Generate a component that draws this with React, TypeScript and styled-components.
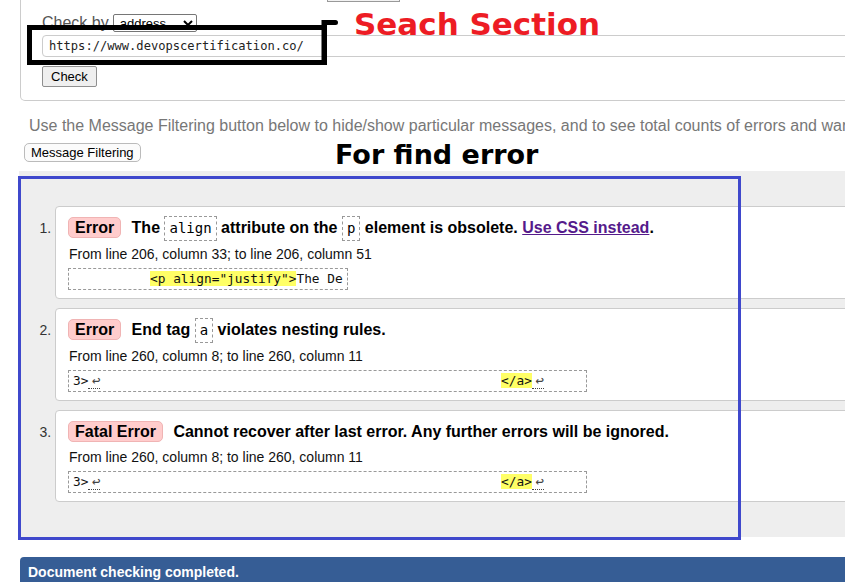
import React from "react";
import styled, { createGlobalStyle } from "styled-components";

const GlobalStyle = createGlobalStyle`
  html, body {
    margin: 0;
    padding: 0;
    overflow: hidden;
    background: #fff;
  }
  body {
    font-family: "Liberation Sans", Arial, sans-serif;
    color: #000;
  }
`;

const Page = styled.div`
  position: relative;
  display: flow-root;
  width: 1000px;
  padding-left: 19px;
  box-sizing: border-box;
`;

const FormBox = styled.form`
  margin-top: -24px;
  margin-left: 1px;
  padding: 0 0 13px 21px;
  border: 1px solid #ccc;
  border-top: none;
  border-radius: 0 0 0 5px;
`;

const TabRow = styled.div`
  display: flex;
  padding-left: 285px;
`;

const Tab = styled.div`
  width: 73px;
  height: 26px;
  box-sizing: border-box;
  border: 1px solid #999;
  background: #f2f2f2;
`;

const CheckByRow = styled.div`
  display: flex;
  align-items: center;
  gap: 4px;
  margin-top: 12px;
  font-size: 16px;
  color: #555;
`;

const Select = styled.select`
  width: 84px;
  height: 18px;
  padding: 0 0 0 2px;
  font-family: "Liberation Sans", Arial, sans-serif;
  font-size: 13px;
  border: 1px solid #767676;
  border-radius: 2px;
  background: #fff;
  color: #000;
`;

const UrlInput = styled.input`
  display: block;
  margin-top: 3px;
  width: 900px;
  height: 22px;
  box-sizing: border-box;
  padding: 0 6px;
  border: 1px solid #ccc;
  border-radius: 4px 0 0 4px;
  font-family: "DejaVu Sans Mono", monospace;
  font-size: 12.1px;
  color: #222;
  outline: none;
`;

const Button = styled.button`
  display: block;
  margin-top: 9px;
  height: 21px;
  padding: 0 8px;
  font-family: "Liberation Sans", Arial, sans-serif;
  font-size: 13px;
  line-height: 19px;
  color: #000;
  background: #efefef;
  border: 1px solid #8f8f8f;
  border-radius: 2px;
`;

const Intro = styled.p`
  margin: 16px 0 0 10px;
  font-size: 16px;
  line-height: 18.4px;
  color: #777;
  white-space: nowrap;
`;

const FilterButton = styled.button`
  display: block;
  margin: 8px 0 0 5px;
  height: 19px;
  padding: 0 6px;
  font-family: "Liberation Sans", Arial, sans-serif;
  font-size: 13px;
  line-height: 17px;
  color: #000;
  background: #fbfbfb;
  border: 1px solid #bbb;
  border-radius: 5px;
`;

const Results = styled.ol`
  margin: 9px 0 0;
  padding: 35px 0 35px 36px;
  background: #eee;
  list-style: decimal outside;
`;

const Card = styled.li`
  margin-bottom: 9px;
  padding: 8px 12px 8px;
  background: #fff;
  border: 1px solid #ccc;
  border-radius: 4px;
  font-size: 14px;
  color: #333;

  &:last-child {
    margin-bottom: 0;
  }

  &::marker {
    font-size: 14px;
    color: #333;
  }
`;

const Heading = styled.div`
  font-size: 16px;
  font-weight: bold;
  line-height: 25px;
  color: #000;
  white-space: nowrap;
`;

const Badge = styled.span`
  display: inline-block;
  margin-right: 6px;
  padding: 0 6px;
  line-height: 19px;
  background: #ffcccc;
  border: 1px solid #f0b4b4;
  border-radius: 5px;
`;

const Code = styled.code`
  display: inline-block;
  padding: 0 4px;
  line-height: 23px;
  font-family: "DejaVu Sans Mono", monospace;
  font-size: 14px;
  font-weight: normal;
  border: 1px dashed #999;
`;

const DocLink = styled.a`
  color: #551a8b;
  text-decoration: underline;
`;

const Location = styled.p`
  margin: 4px 0 0 1px;
  font-size: 14px;
  line-height: 18px;
  color: #111;
`;

const Extract = styled.div`
  display: inline-block;
  margin-top: 5px;
  padding: 0 4px;
  line-height: 20px;
  font-family: "DejaVu Sans Mono", monospace;
  font-size: 12.8px;
  color: #111;
  white-space: pre;
  border: 1px dashed #999;
  vertical-align: top;
`;

const Mark = styled.mark`
  background: #ffff66;
  color: #111;
`;

const Lf = styled.abbr`
  display: inline-block;
  width: 12px;
  line-height: 15px;
  font-size: 14px;
  text-align: right;
  text-decoration: none;
  border-bottom: 1px dotted #444;
  color: #444;
`;

const StatusBar = styled.div`
  margin: 20px 0 0 1px;
  padding: 7px 8px 8px;
  background: #365d95;
  border-radius: 4px 0 0 0;
  color: #fff;
  font-size: 14px;
  font-weight: bold;
  line-height: 16px;
`;

const CalloutText = styled.div<{ $color: string; $size: number }>`
  position: absolute;
  font-family: "DejaVu Sans", sans-serif;
  font-weight: bold;
  font-size: ${(p) => p.$size}px;
  line-height: ${(p) => p.$size}px;
  color: ${(p) => p.$color};
  white-space: nowrap;
`;

const Frame = styled.svg`
  position: absolute;
  left: 0;
  top: 0;
  pointer-events: none;
`;

const lineBreakExtract = (
  <>
    {"3>"}
    <Lf title="Line feed">↩</Lf>
    {" ".repeat(52)}
    <Mark>{"</a>"}</Mark>
    <Lf title="Line feed">↩</Lf>
    {"     "}
  </>
);

const messages = [
  {
    kind: "Error",
    text: (
      <>
        The <Code>align</Code> attribute on the <Code>p</Code> element is
        obsolete. <DocLink href="#">Use CSS instead</DocLink>.
      </>
    ),
    location: "From line 206, column 33; to line 206, column 51",
    extract: (
      <>
        {"          "}
        <Mark>{'<p align="justify">'}</Mark>
        {"The De"}
      </>
    ),
  },
  {
    kind: "Error",
    text: (
      <>
        End tag <Code>a</Code> violates nesting rules.
      </>
    ),
    location: "From line 260, column 8; to line 260, column 11",
    extract: lineBreakExtract,
  },
  {
    kind: "Fatal Error",
    text: <>Cannot recover after last error. Any further errors will be ignored.</>,
    location: "From line 260, column 8; to line 260, column 11",
    extract: lineBreakExtract,
  },
];

const App = () => {
  return (
    <Page>
      <GlobalStyle />
      <FormBox onSubmit={(e) => e.preventDefault()}>
        <TabRow>
          <Tab />
        </TabRow>
        <CheckByRow>
          Check by
          <Select defaultValue="address">
            <option value="address">address</option>
          </Select>
        </CheckByRow>
        <UrlInput defaultValue="https://www.devopscertification.co/" />
        <Button type="submit">Check</Button>
      </FormBox>

      <Intro>
        Use the Message Filtering button below to hide/show particular
        messages, and to see total counts of errors and warnings.
      </Intro>
      <FilterButton type="button">Message Filtering</FilterButton>

      <Results>
        {messages.map((m, i) => (
          <Card key={i}>
            <Heading>
              <Badge>{m.kind}</Badge> {m.text}
            </Heading>
            <Location>{m.location}</Location>
            <Extract>{m.extract}</Extract>
          </Card>
        ))}
      </Results>

      <StatusBar>Document checking completed.</StatusBar>

      <Frame width="760" height="560" viewBox="0 0 760 560">
        <rect x="29.5" y="27.5" width="295" height="35" fill="none" stroke="#000" strokeWidth="5" />
        <path d="M324 62 L324 22.5 L335.5 22.5" fill="none" stroke="#000" strokeWidth="5" strokeLinecap="round" />
        <rect x="19.5" y="177.5" width="720" height="361" fill="none" stroke="#3f48cc" strokeWidth="3" />
      </Frame>
      <CalloutText $color="#ed1c24" $size={31} style={{ left: 354, top: 9 }}>
        Seach Section
      </CalloutText>
      <CalloutText $color="#000" $size={27} style={{ left: 335, top: 141 }}>
        For find error
      </CalloutText>
    </Page>
  );
};

export default App;
